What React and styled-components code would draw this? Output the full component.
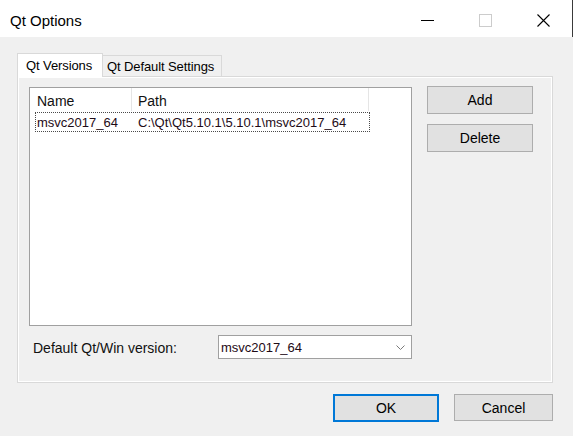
import React from 'react';
import styled, { createGlobalStyle } from 'styled-components';

const Global = createGlobalStyle`
  html, body { margin: 0; padding: 0; background: #f0f0f0; }
  body { font-family: "Liberation Sans", Arial, sans-serif; color: #000; }
  * { box-sizing: border-box; }
`;

const Window = styled.div`
  width: 573px;
  height: 436px;
  background: #f0f0f0;
  display: flex;
  flex-direction: column;
  overflow: hidden;
`;

const TitleBar = styled.div`
  height: 37px;
  flex: none;
  background: #fff;
  border-right: 1px solid #3a3a3a;
  display: flex;
  align-items: center;
  padding-left: 10px;
`;

const Title = styled.div`
  flex: 1;
  font-size: 15px;
  padding-top: 3px;
  color: #000;
`;

const Caption = styled.div`
  width: 58px;
  height: 37px;
  display: flex;
  align-items: center;
  justify-content: center;
  padding-top: 4px;
`;

const Body = styled.div`
  padding: 16px 20px 0 17px;
  display: flex;
  flex-direction: column;
`;

const TabStrip = styled.div`
  height: 23px;
  display: flex;
  align-items: flex-end;
  position: relative;
  z-index: 1;
`;

const Tab = styled.div`
  height: ${p => (p.$active ? '24px' : '21px')};
  margin-bottom: ${p => (p.$active ? '-1px' : '0')};
  margin-left: ${p => (p.$active ? '0' : '-1px')};
  width: ${p => p.$w}px;
  border: 1px solid #d9d9d9;
  border-bottom: none;
  background: ${p => (p.$active ? '#ffffff' : '#f0f0f0')};
  font-size: 13px;
  letter-spacing: -0.1px;
  display: flex;
  align-items: center;
  padding-left: ${p => (p.$active ? '8px' : '4px')};
  padding-bottom: ${p => (p.$active ? '1px' : '0')};
  white-space: nowrap;
  position: relative;
  z-index: ${p => (p.$active ? 2 : 1)};
`;

const Panel = styled.div`
  width: 536px;
  height: 307px;
  border: 1px solid #d9d9d9;
  box-shadow: inset -1px -1px 0 #ffffff, inset 1px 1px 0 #ffffff;
  background: #f0f0f0;
  display: flex;
  padding: 10px 0 0 11px;
  gap: 15px;
`;

const LeftCol = styled.div`
  display: flex;
  flex-direction: column;
  gap: 9px;
`;

const ListView = styled.div`
  width: 383px;
  height: 239px;
  border: 1px solid #a0a0a0;
  background: #fff;
  display: flex;
  flex-direction: column;
`;

const Header = styled.div`
  height: 23px;
  display: grid;
  grid-template-columns: 102px 237px;
  font-size: 14px;
  color: #111;
`;

const HeaderCell = styled.div`
  border-right: 1px solid #e5e5e5;
  padding-left: ${p => p.$pl}px;
  display: flex;
  align-items: center;
  padding-top: 2px;
`;

const Row = styled.div`
  margin: 1px 0 0 5px;
  width: 335px;
  height: 20px;
  border: 1px dotted #4a4a4a;
  display: grid;
  grid-template-columns: 101px 1fr;
  align-items: center;
  font-size: 13px;
  color: #1e0b16;
  padding-left: 1px;
  white-space: nowrap;
`;

const ComboRow = styled.div`
  display: flex;
  align-items: center;
  height: 24px;
  padding-left: 4px;
`;

const Label = styled.div`
  width: 185px;
  font-size: 14px;
  color: #111;
  padding-top: 2px;
`;

const Combo = styled.div`
  width: 194px;
  height: 24px;
  border: 1px solid #a0a0a0;
  background: #fff;
  display: flex;
  align-items: center;
  padding: 0 6px 0 2px;
  font-size: 13px;
  color: #1e0b16;
`;

const ComboText = styled.div`
  flex: 1;
`;

const RightCol = styled.div`
  display: flex;
  flex-direction: column;
  gap: 10px;
  padding-top: 0;
  margin-top: -1px;
`;

const Button = styled.div`
  width: ${p => p.$w}px;
  height: ${p => p.$h}px;
  background: #e1e1e1;
  border: ${p => (p.$default ? '2px solid #0078d7' : '1px solid #adadad')};
  display: flex;
  align-items: center;
  justify-content: center;
  font-size: 14px;
  color: #000;
`;

const Footer = styled.div`
  display: flex;
  justify-content: flex-end;
  gap: 15px;
  margin-top: 11px;
  padding-right: 0;
  width: 536px;
`;

export default function App() {
  return (
    <Window>
      <Global />
      <TitleBar>
        <Title>Qt Options</Title>
        <Caption>
          <svg width="13" height="13" viewBox="0 0 13 13">
            <line x1="0" y1="6.5" x2="13" y2="6.5" stroke="#000" strokeWidth="1" />
          </svg>
        </Caption>
        <Caption>
          <svg width="13" height="13" viewBox="0 0 13 13">
            <rect x="0.5" y="0.5" width="12" height="12" fill="none" stroke="#cccccc" strokeWidth="1" />
          </svg>
        </Caption>
        <Caption>
          <svg width="13" height="13" viewBox="0 0 13 13">
            <path d="M0.5 0.5 L12.5 12.5 M12.5 0.5 L0.5 12.5" stroke="#000" strokeWidth="1.1" fill="none" />
          </svg>
        </Caption>
      </TitleBar>
      <Body>
        <TabStrip>
          <Tab $active $w={86}>Qt Versions</Tab>
          <Tab $w={120}>Qt Default Settings</Tab>
        </TabStrip>
        <Panel>
          <LeftCol>
            <ListView>
              <Header>
                <HeaderCell $pl={7}>Name</HeaderCell>
                <HeaderCell $pl={6}>Path</HeaderCell>
              </Header>
              <Row>
                <span>msvc2017_64</span>
                <span>C:\Qt\Qt5.10.1\5.10.1\msvc2017_64</span>
              </Row>
            </ListView>
            <ComboRow>
              <Label>Default Qt/Win version:</Label>
              <Combo>
                <ComboText>msvc2017_64</ComboText>
                <svg width="9" height="5" viewBox="0 0 9 5">
                  <path d="M0.5 0.5 L4.5 4.5 L8.5 0.5" stroke="#7a7a7a" strokeWidth="1" fill="none" />
                </svg>
              </Combo>
            </ComboRow>
          </LeftCol>
          <RightCol>
            <Button $w={106} $h={28}>Add</Button>
            <Button $w={106} $h={28}>Delete</Button>
          </RightCol>
        </Panel>
        <Footer>
          <Button $default $w={106} $h={28}>OK</Button>
          <Button $w={99} $h={27}>Cancel</Button>
        </Footer>
      </Body>
    </Window>
  );
}
